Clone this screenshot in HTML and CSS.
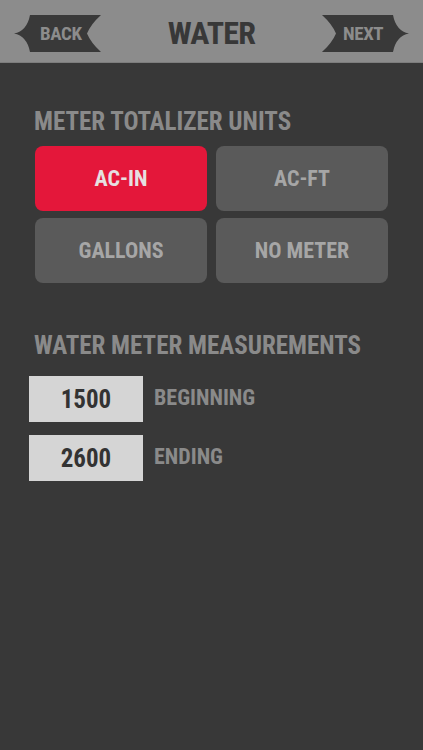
FILE: index.html
```html
<!DOCTYPE html>
<html>
<head>
<meta charset="utf-8">
<link rel="stylesheet" href="styles.css">
</head>
<body>
<div class="screen">
  <header class="topbar">
    <div class="ribbon back">
      <svg class="ribbon-shape" width="88" height="37" viewBox="0 0 88 37"><path d="M0 18.5 Q13 16 16 0 L87 0 Q77 9 73 18.5 Q77 28 87 37 L16 37 Q13 21 0 18.5 Z" fill="#393939"/></svg>
      <span class="ribbon-text">BACK</span>
    </div>
    <h1 class="title">WATER</h1>
    <div class="ribbon next">
      <svg class="ribbon-shape" width="88" height="37" viewBox="0 0 88 37"><path d="M88 18.5 Q75 16 72 0 L1 0 Q11 9 15 18.5 Q11 28 1 37 L72 37 Q75 21 88 18.5 Z" fill="#393939"/></svg>
      <span class="ribbon-text">NEXT</span>
    </div>
  </header>

  <main class="content">
    <h2 class="section-label first">METER TOTALIZER UNITS</h2>
    <div class="unit-grid">
      <div class="unit-btn active">AC-IN</div>
      <div class="unit-btn">AC-FT</div>
      <div class="unit-btn">GALLONS</div>
      <div class="unit-btn">NO METER</div>
    </div>

    <h2 class="section-label second">WATER METER MEASUREMENTS</h2>
    <div class="measure-list">
      <div class="measure-row">
        <div class="measure-box">1500</div>
        <span class="measure-label">BEGINNING</span>
      </div>
      <div class="measure-row">
        <div class="measure-box">2600</div>
        <span class="measure-label">ENDING</span>
      </div>
    </div>
  </main>
</div>
</body>
</html>
```

FILE: styles.css
```css
html, body {
  margin: 0;
  padding: 0;
  background: #383838;
}

body {
  font-family: "Roboto Condensed", "Open Sans Condensed", "Liberation Sans", sans-serif;
  font-weight: bold;
}

.screen {
  width: 423px;
  height: 750px;
  background: #383838;
  overflow: hidden;
}

.topbar {
  height: 63px;
  background: #8c8c8c;
  border-bottom: 1px solid #7d7d7d;
  display: flex;
  align-items: flex-start;
  justify-content: space-between;
  padding: 0 14px 0 14px;
  box-sizing: border-box;
}

.ribbon {
  position: relative;
  width: 88px;
  height: 37px;
  margin-top: 15px;
}

.ribbon-shape {
  display: block;
}

.ribbon-text {
  position: absolute;
  top: 0;
  height: 37px;
  line-height: 37px;
  font-size: 19px;
  letter-spacing: -0.4px;
  color: #8c8c8c;
}

.back .ribbon-text {
  left: 26px;
}

.next .ribbon-text {
  left: 22px;
}

.title {
  margin: 0;
  margin-top: 15px;
  font-size: 32px;
  line-height: 37px;
  letter-spacing: -0.8px;
  color: #383838;
  font-weight: bold;
}

.section-label {
  margin: 0;
  padding-left: 34px;
  font-size: 25px;
  line-height: 30px;
  color: #8a8a8a;
  font-weight: bold;
  white-space: nowrap;
}

.section-label.first {
  margin-top: 44px;
}

.section-label.second {
  margin-top: 48px;
}

.unit-grid {
  margin: 9px 0 0 35px;
  width: 353px;
  display: grid;
  grid-template-columns: 172px 172px;
  column-gap: 9px;
  row-gap: 7px;
}

.unit-btn {
  height: 65px;
  border-radius: 8px;
  background: #5a5a5a;
  color: #a6a6a6;
  font-size: 22px;
  display: flex;
  align-items: center;
  justify-content: center;
}

.unit-btn.active {
  background: #e4173a;
  color: #e6e0e1;
}

.measure-list {
  margin: 15px 0 0 29px;
  display: flex;
  flex-direction: column;
  gap: 13px;
}

.measure-row {
  display: flex;
  align-items: center;
}

.measure-box {
  width: 114px;
  height: 46px;
  background: #d5d5d5;
  color: #333333;
  font-size: 25px;
  display: flex;
  align-items: center;
  justify-content: center;
}

.measure-label {
  margin-left: 11px;
  font-size: 22px;
  color: #8a8a8a;
  margin-top: -3px;
}
```
